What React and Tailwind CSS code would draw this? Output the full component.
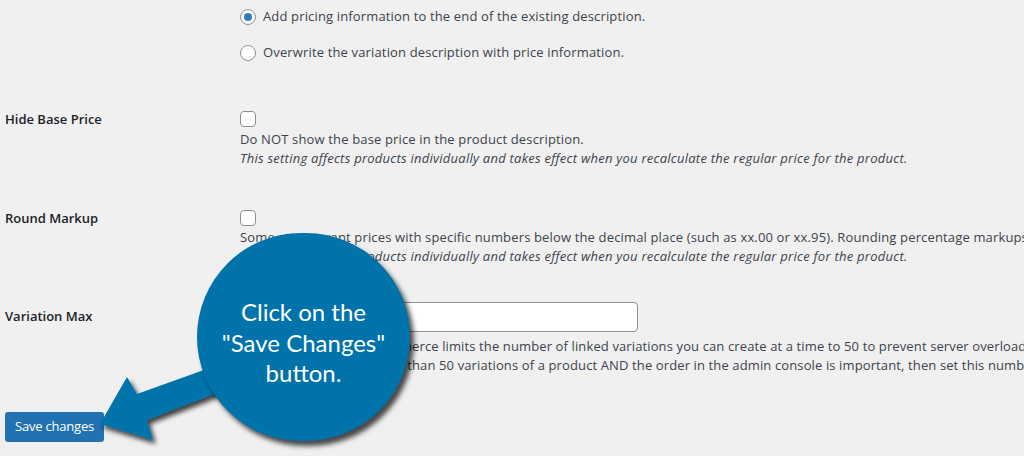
export default function App() {
  const font = { fontFamily: '"Open Sans", "Noto Sans", sans-serif' };

  return (
    <div className="relative w-[1024px] h-[456px] overflow-hidden bg-[#f0f0f1] text-[#3c434a] text-[13px]" style={font}>
      <div className="pl-[5px] whitespace-nowrap">
        {/* radio options from the previous setting */}
        <div className="pl-[235px] pt-[7px]">
          <label className="flex items-center h-[20px]">
            <span className="w-[16px] h-[16px] rounded-full border border-[#8c8f94] bg-white flex items-center justify-center shrink-0">
              <span className="w-[8px] h-[8px] rounded-full bg-[#2f7bc0]"></span>
            </span>
            <span className="ml-[7px] tracking-[0.15px]">Add pricing information to the end of the existing description.</span>
          </label>
          <label className="flex items-center h-[20px] mt-[16px]">
            <span className="w-[16px] h-[16px] rounded-full border border-[#8c8f94] bg-white shrink-0"></span>
            <span className="ml-[7px] tracking-[0.15px]">Overwrite the variation description with price information.</span>
          </label>
        </div>

        {/* Hide Base Price */}
        <div className="flex mt-[46px]">
          <div className="w-[235px] shrink-0 leading-[20px] font-semibold text-[#1d2327]">Hide Base Price</div>
          <div className="leading-[19px]">
            <div className="w-[16px] h-[16px] mt-[2px] rounded-[4px] border border-[#8c8f94] bg-white"></div>
            <div className="mt-[3px] tracking-[0.15px]">Do NOT show the base price in the product description.</div>
            <div className="italic tracking-[0.25px]">This setting affects products individually and takes effect when you recalculate the regular price for the product.</div>
          </div>
        </div>

        {/* Round Markup */}
        <div className="flex mt-[40px]">
          <div className="w-[235px] shrink-0 leading-[20px] font-semibold text-[#1d2327]">Round Markup</div>
          <div className="leading-[19px]">
            <div className="w-[16px] h-[16px] mt-[2px] rounded-[4px] border border-[#8c8f94] bg-white"></div>
            <div className="mt-[2px] tracking-[0.15px]">Some stores want prices with specific numbers below the decimal place (such as xx.00 or xx.95). Rounding percentage markups</div>
            <div className="italic tracking-[0.25px]">This setting affects products individually and takes effect when you recalculate the regular price for the product.</div>
          </div>
        </div>

        {/* Variation Max */}
        <div className="flex mt-[36px]">
          <div className="w-[235px] shrink-0 pt-[4px] leading-[20px] font-semibold text-[#1d2327]">Variation Max</div>
          <div className="leading-[19px]">
            <div className="w-[398px] h-[30px] rounded-[4px] border border-[#8c8f94] bg-white"></div>
            <div className="mt-[5px] tracking-[0.12px]">Please note that WooCommerce limits the number of linked variations you can create at a time to 50 to prevent server overload.</div>
            <div className="tracking-[0.12px]">If you need to create more than 50 variations of a product AND the order in the admin console is important, then set this number</div>
          </div>
        </div>

        <button className="mt-[37px] h-[30px] px-[10px] rounded-[3px] bg-[#2271b1] text-white text-[13px] tracking-[-0.2px]">Save changes</button>
      </div>

      {/* callout arrow */}
      <svg className="absolute inset-0 pointer-events-none" width="1024" height="456" viewBox="0 0 1024 456">
        <defs>
          <filter id="sh" x="-20%" y="-20%" width="150%" height="150%">
            <feDropShadow dx="3" dy="4" stdDeviation="2.5" floodColor="#000" floodOpacity="0.75" />
          </filter>
        </defs>
        <polygon
          points="100,424 127,377 137,394 215,366 222,391 147,420 153,440"
          fill="#0073aa"
          filter="url(#sh)"
        />
      </svg>

      {/* callout bubble */}
      <div
        className="absolute left-[197px] top-[233px] w-[213px] h-[208px] rounded-full bg-[#0073aa] shadow-[4px_5px_5px_rgba(0,0,0,0.7)] flex flex-col items-center pt-[64px] text-white text-[24px] leading-[30.5px]"
        style={{ fontFamily: 'Lato, "Open Sans", sans-serif' }}
      >
        <div>Click on the</div>
        <div>"Save Changes"</div>
        <div>button.</div>
      </div>
    </div>
  );
}
